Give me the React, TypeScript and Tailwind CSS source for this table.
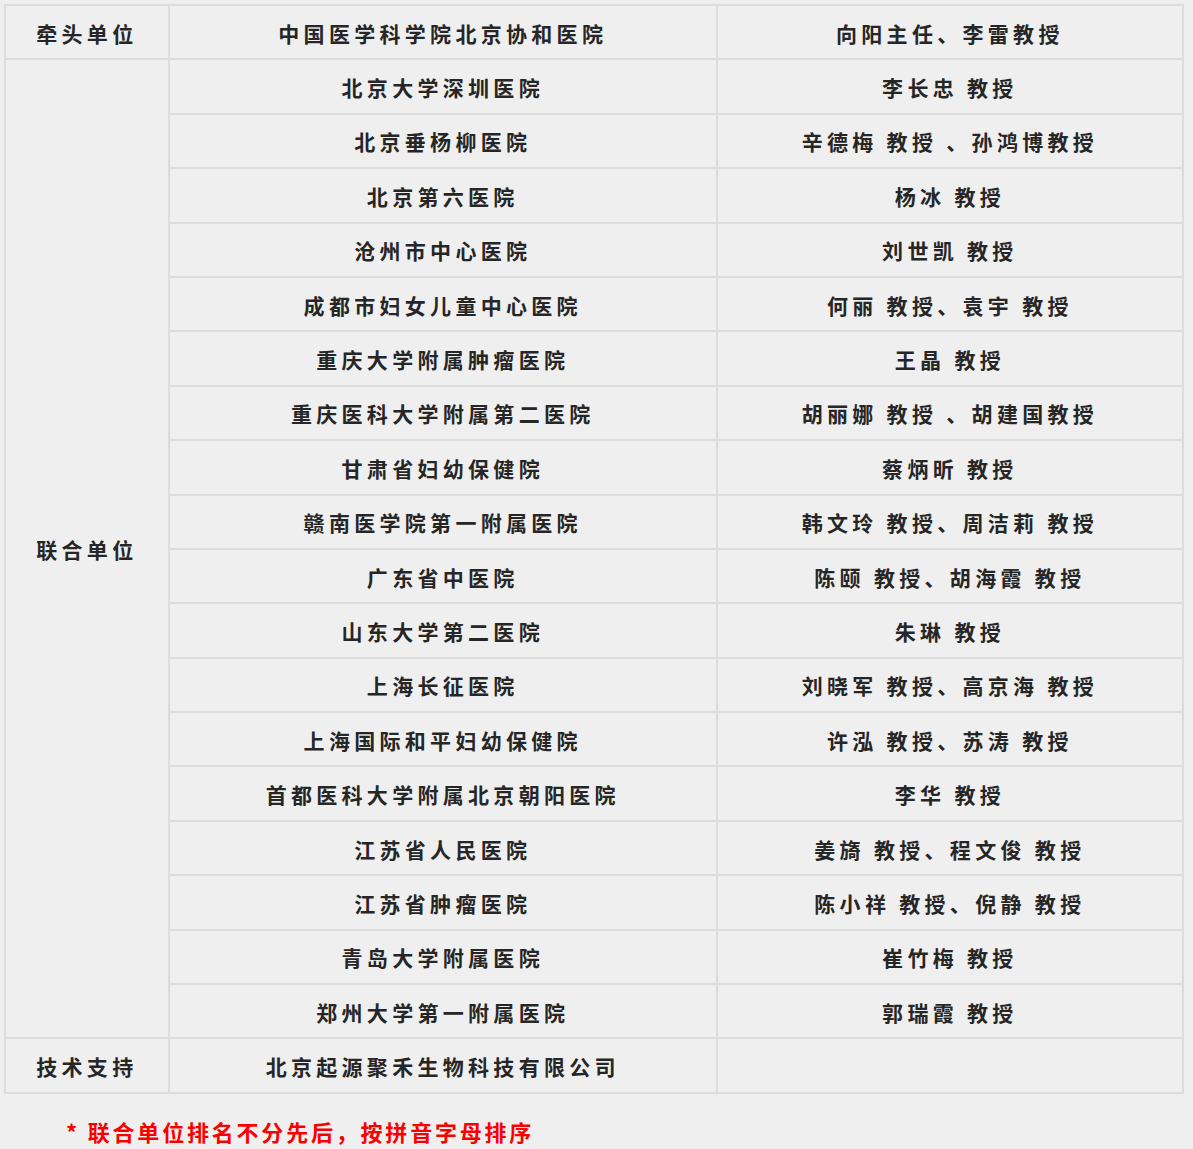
const members: [string, string][] = [
  ['北京大学深圳医院', '李长忠 教授'],
  ['北京垂杨柳医院', '辛德梅 教授 、孙鸿博教授'],
  ['北京第六医院', '杨冰 教授'],
  ['沧州市中心医院', '刘世凯 教授'],
  ['成都市妇女儿童中心医院', '何丽 教授、袁宇 教授'],
  ['重庆大学附属肿瘤医院', '王晶 教授'],
  ['重庆医科大学附属第二医院', '胡丽娜 教授 、胡建国教授'],
  ['甘肃省妇幼保健院', '蔡炳昕 教授'],
  ['赣南医学院第一附属医院', '韩文玲 教授、周洁莉 教授'],
  ['广东省中医院', '陈颐 教授、胡海霞 教授'],
  ['山东大学第二医院', '朱琳 教授'],
  ['上海长征医院', '刘晓军 教授、高京海 教授'],
  ['上海国际和平妇幼保健院', '许泓 教授、苏涛 教授'],
  ['首都医科大学附属北京朝阳医院', '李华 教授'],
  ['江苏省人民医院', '姜旖 教授、程文俊 教授'],
  ['江苏省肿瘤医院', '陈小祥 教授、倪静 教授'],
  ['青岛大学附属医院', '崔竹梅 教授'],
  ['郑州大学第一附属医院', '郭瑞霞 教授'],
];

const cell = 'border-2 border-[#dcdcdc] text-center align-middle h-[54.4px] pt-[2px] pb-0 px-0';

export default function App() {
  return (
    <div
      className="min-h-[1149px] w-[1193px] bg-[#efefef] pt-1 pl-1 text-[#262626] font-bold"
      style={{ fontFamily: '"Noto Sans CJK SC", "Noto Sans", sans-serif' }}
    >
      <table className="w-[1180px] border-collapse border-2 border-[#dcdcdc] text-[21px] tracking-[4.3px] leading-none">
        <colgroup>
          <col className="w-[164px]" />
          <col className="w-[549px]" />
          <col className="w-[467px]" />
        </colgroup>
        <tbody>
          <tr>
            <td className={cell}>牵头单位</td>
            <td className={cell}>中国医学科学院北京协和医院</td>
            <td className={cell}>向阳主任、李雷教授</td>
          </tr>
          {members.map(([org, people], i) => (
            <tr key={org}>
              {i === 0 && (
                <td className={cell} rowSpan={members.length}>
                  联合单位
                </td>
              )}
              <td className={cell}>{org}</td>
              <td className={cell}>{people}</td>
            </tr>
          ))}
          <tr>
            <td className={cell}>技术支持</td>
            <td className={cell}>北京起源聚禾生物科技有限公司</td>
            <td className={cell}></td>
          </tr>
        </tbody>
      </table>
      <p className="mt-[26px] pl-[62px] text-[22px] tracking-[2.8px] text-[#fa0000] leading-none">
        * 联合单位排名不分先后，按拼音字母排序
      </p>
    </div>
  );
}
